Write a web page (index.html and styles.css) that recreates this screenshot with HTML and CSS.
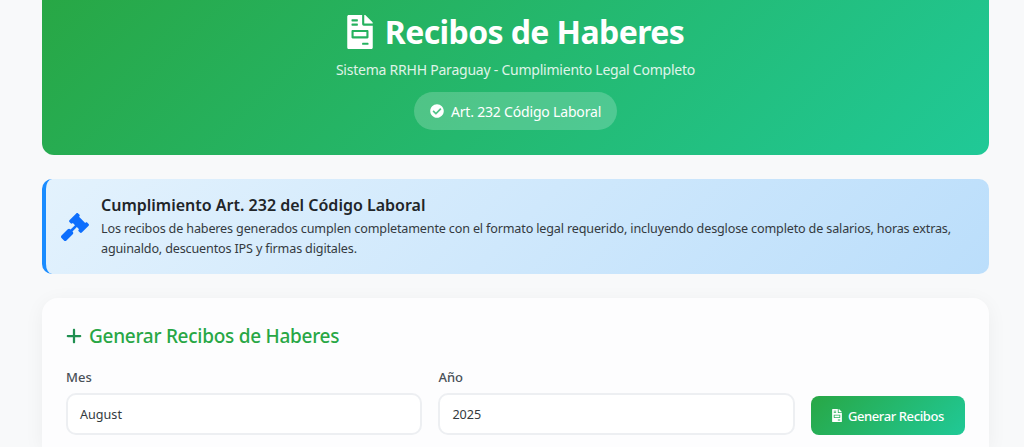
FILE: index.html
```html
<!DOCTYPE html>
<html>
<head>
<meta charset="UTF-8">
<title>Recibos de Haberes</title>
<link rel="stylesheet" href="styles.css">
</head>
<body>

<div class="wrapper">
	<!-- cabecera -->
	<div class="hero">
		<h1 class="hero-title">
			<svg class="hero-icon" viewBox="0 0 384 512"><path d="M288 256H96v64h192v-64zm89-151L279.1 7c-4.5-4.5-10.6-7-17-7H256v128h128v-6.1c0-6.3-2.5-12.4-7-16.9zm-153 31V0H24C10.7 0 0 10.7 0 24v464c0 13.3 10.7 24 24 24h336c13.3 0 24-10.7 24-24V160H248c-13.2 0-24-10.8-24-24zM64 72c0-4.42 3.58-8 8-8h80c4.42 0 8 3.58 8 8v16c0 4.42-3.58 8-8 8H72c-4.42 0-8-3.58-8-8V72zm0 64c0-4.42 3.58-8 8-8h80c4.42 0 8 3.58 8 8v16c0 4.42-3.58 8-8 8H72c-4.42 0-8-3.58-8-8v-16zm256 304c0 4.42-3.58 8-8 8h-80c-4.42 0-8-3.58-8-8v-16c0-4.42 3.58-8 8-8h80c4.42 0 8 3.58 8 8v16zm0-200v96c0 8.84-7.16 16-16 16H80c-8.84 0-16-7.16-16-16v-96c0-8.84 7.16-16 16-16h224c8.84 0 16 7.16 16 16z"/></svg>
			Recibos de Haberes
		</h1>
		<p class="hero-sub">Sistema RRHH Paraguay - Cumplimiento Legal Completo</p>
		<div class="hero-badge">
			<svg class="badge-icon" viewBox="0 0 512 512"><path d="M504 256c0 136.967-111.033 248-248 248S8 392.967 8 256 119.033 8 256 8s248 111.033 248 248zM227.314 387.314l184-184c6.248-6.248 6.248-16.379 0-22.627l-22.627-22.627c-6.248-6.249-16.379-6.249-22.628 0L216 308.118l-70.059-70.059c-6.248-6.248-16.379-6.248-22.628 0l-22.627 22.627c-6.248 6.248-6.248 16.379 0 22.627l104 104c6.249 6.249 16.379 6.249 22.628.001z"/></svg>
			Art. 232 Código Laboral
		</div>
	</div>

	<!-- aviso legal -->
	<div class="notice">
		<svg class="notice-icon" viewBox="0 0 512 512"><path d="M504.971 199.362l-22.627-22.627c-9.373-9.373-24.569-9.373-33.941 0l-5.657 5.657L329.608 69.255l5.657-5.657c9.373-9.373 9.373-24.569 0-33.941L312.638 7.029c-9.373-9.373-24.569-9.373-33.941 0L154.246 131.48c-9.373 9.373-9.373 24.569 0 33.941l22.627 22.627c9.373 9.373 24.569 9.373 33.941 0l5.657-5.657 39.598 39.598-81.04 81.04-5.657-5.657c-12.497-12.497-32.758-12.497-45.255 0L9.373 412.118c-12.497 12.497-12.497 32.758 0 45.255l45.255 45.255c12.497 12.497 32.758 12.497 45.255 0l114.745-114.745c12.497-12.497 12.497-32.758 0-45.255l-5.657-5.657 81.04-81.04 39.598 39.598-5.657 5.657c-9.373 9.373-9.373 24.569 0 33.941l22.627 22.627c9.373 9.373 24.569 9.373 33.941 0l124.451-124.451c9.372-9.372 9.372-24.568 0-33.941z"/></svg>
		<div>
			<h2 class="notice-title">Cumplimiento Art. 232 del Código Laboral</h2>
			<p class="notice-text">Los recibos de haberes generados cumplen completamente con el formato legal requerido, incluyendo desglose completo de salarios, horas extras, aguinaldo, descuentos IPS y firmas digitales.</p>
		</div>
	</div>

	<!-- formulario -->
	<div class="card">
		<h3 class="card-title">
			<svg class="card-icon" viewBox="0 0 448 512"><path d="M256 80c0-17.7-14.3-32-32-32s-32 14.3-32 32V224H48c-17.7 0-32 14.3-32 32s14.3 32 32 32H192V432c0 17.7 14.3 32 32 32s32-14.3 32-32V288H400c17.7 0 32-14.3 32-32s-14.3-32-32-32H256V80z"/></svg>
			Generar Recibos de Haberes
		</h3>
		<div class="form-row">
			<div class="field">
				<label class="field-label">Mes</label>
				<div class="field-box">August</div>
			</div>
			<div class="field">
				<label class="field-label">Año</label>
				<div class="field-box">2025</div>
			</div>
			<button class="btn">
				<svg class="btn-icon" viewBox="0 0 384 512"><path d="M288 256H96v64h192v-64zm89-151L279.1 7c-4.5-4.5-10.6-7-17-7H256v128h128v-6.1c0-6.3-2.5-12.4-7-16.9zm-153 31V0H24C10.7 0 0 10.7 0 24v464c0 13.3 10.7 24 24 24h336c13.3 0 24-10.7 24-24V160H248c-13.2 0-24-10.8-24-24zM64 72c0-4.42 3.58-8 8-8h80c4.42 0 8 3.58 8 8v16c0 4.42-3.58 8-8 8H72c-4.42 0-8-3.58-8-8V72zm0 64c0-4.42 3.58-8 8-8h80c4.42 0 8 3.58 8 8v16c0 4.42-3.58 8-8 8H72c-4.42 0-8-3.58-8-8v-16zm256 304c0 4.42-3.58 8-8 8h-80c-4.42 0-8-3.58-8-8v-16c0-4.42 3.58-8 8-8h80c4.42 0 8 3.58 8 8v16zm0-200v96c0 8.84-7.16 16-16 16H80c-8.84 0-16-7.16-16-16v-96c0-8.84 7.16-16 16-16h224c8.84 0 16 7.16 16 16z"/></svg>
				Generar Recibos
			</button>
		</div>
	</div>
</div>

</body>
</html>
```

FILE: styles.css
```css
* { box-sizing: border-box; }
html, body { height: 100%; overflow: hidden; }
body {
	margin: 0;
	background-color: #f8f9fa;
	font-family: "Noto Sans", "Liberation Sans", sans-serif;
	color: #212529;
}
.wrapper { padding: 0 35px 0 42px; }

.hero {
	height: 155px;
	padding-top: 10px;
	text-align: center;
	color: #fff;
	border-radius: 0 0 12px 12px;
	background: linear-gradient(135deg, #28a745, #20c997);
}
.hero-title {
	display: flex;
	align-items: center;
	justify-content: center;
	gap: 12px;
	margin: 0;
	font-size: 32px;
	line-height: 44px;
	font-weight: 700;
	letter-spacing: -.6px;
}
.hero-icon { width: 26px; height: 34px; fill: #fff; }
.hero-sub {
	margin: 6px 0 0;
	font-size: 14px;
	line-height: 20px;
	letter-spacing: -.23px;
	opacity: .85;
}
.hero-badge {
	display: inline-flex;
	align-items: center;
	gap: 7px;
	height: 38px;
	margin-top: 12px;
	padding: 0 16px;
	font-size: 14px;
	letter-spacing: -.18px;
	border-radius: 19px;
	background-color: rgba(255,255,255,.2);
}
.badge-icon { width: 14px; height: 14px; fill: #fff; }

.notice {
	display: flex;
	align-items: center;
	gap: 12px;
	height: 95px;
	margin-top: 24px;
	padding: 0 20px 0 15px;
	border-left: 4px solid #1a8cff;
	border-radius: 10px;
	background: linear-gradient(135deg, #e3f2fd, #bbdefb);
}
.notice-icon { flex: none; width: 28px; height: 28px; fill: #0d6efd; }
.notice-title {
	margin: 0 0 3px;
	font-size: 16px;
	line-height: 22px;
	font-weight: 600;
}
.notice-text {
	margin: 0;
	font-size: 12.6px;
	line-height: 20px;
	letter-spacing: -.16px;
	color: #343a40;
}

.card {
	height: 149px;
	margin-top: 24px;
	padding: 24px 24px 0;
	border-radius: 16px 16px 0 0;
	background-color: #fdfdfe;
	box-shadow: 0 4px 20px rgba(0,0,0,.05);
}
.card-title {
	display: flex;
	align-items: center;
	gap: 7px;
	margin: 0 0 18px;
	font-size: 19px;
	line-height: 28px;
	font-weight: 500;
	letter-spacing: -.27px;
	color: #28a745;
}
.card-icon { width: 16px; height: 18px; fill: #1f8f50; }

.form-row {
	display: grid;
	grid-template-columns: 356fr 356fr 154fr;
	gap: 16px;
	align-items: end;
}
.field-label {
	display: block;
	margin-bottom: 7px;
	font-size: 13px;
	line-height: 18px;
	font-weight: 500;
	color: #495057;
}
.field-box {
	height: 42px;
	padding: 0 12px;
	font-size: 12.6px;
	line-height: 40px;
	color: #343a40;
	border: 2px solid #edeff2;
	border-radius: 10px;
	background-color: #fff;
}
.btn {
	display: flex;
	align-items: center;
	justify-content: center;
	gap: 6px;
	height: 39px;
	border: 0;
	border-radius: 8px;
	font-family: inherit;
	font-size: 13px;
	font-weight: 500;
	letter-spacing: -.4px;
	color: #fff;
	background: linear-gradient(135deg, #28a745, #20c997);
}
.btn-icon { width: 10px; height: 13px; fill: #fff; }
```
